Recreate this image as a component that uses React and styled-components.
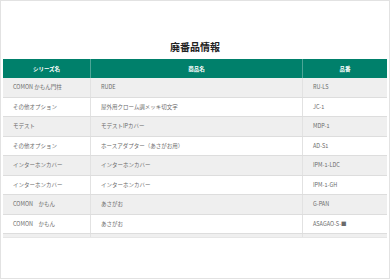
import React from "react"
import styled, { createGlobalStyle } from "styled-components"

const GlobalStyle = createGlobalStyle`
  html, body {
    margin: 0;
    padding: 0;
    background: #ffffff;
    font-family: "Noto Sans CJK JP", "Noto Sans", sans-serif;
  }
`

const rows = [
  ["COMON かもん門柱", "RUDE", "RU-LS"],
  ["その他オプション", "屋外用クローム調メッキ切文字", "JC-1"],
  ["モデスト", "モデストIPカバー", "MDP-1"],
  ["その他オプション", "ホースアダプター（あさがお用）", "AD-S1"],
  ["インターホンカバー", "インターホンカバー", "IPM-1-LDC"],
  ["インターホンカバー", "インターホンカバー", "IPM-1-GH"],
  ["COMON　かもん", "あさがお", "G-PAN"],
  ["COMON　かもん", "あさがお", "ASAGAO-S-■"],
  ["COMON　かもん", "あさがお", "ASAGAO-L"],
  ["モデスト", "モデストポスト", "MDP-2"],
  ["その他オプション", "表札", "NP-1"],
  ["インターホンカバー", "インターホンカバー", "IPM-2"],
  ["COMON かもん門柱", "RUDE", "RU-LL"],
  ["モデスト", "モデストIPカバー", "MDP-3"],
  ["その他オプション", "ホースアダプター", "AD-S2"],
  ["インターホンカバー", "インターホンカバー", "IPM-3"],
  ["COMON　かもん", "あさがお", "G-PAN2"],
  ["モデスト", "モデストポスト", "MDP-4"],
  ["その他オプション", "表札", "NP-2"],
  ["インターホンカバー", "インターホンカバー", "IPM-4"],
]

const App = () => (
  <>
    <GlobalStyle />
    <Frame>
      <Title>廃番品情報</Title>
      <Table>
        <HeadRow>
          <HeadCell>シリーズ名</HeadCell>
          <HeadCell>商品名</HeadCell>
          <HeadCell last>品番</HeadCell>
        </HeadRow>
        <Body>
          {rows.map((r, i) => (
            <Row key={i}>
              <Cell>{r[0]}</Cell>
              <Cell>{r[1]}</Cell>
              <Cell last>{r[2]}</Cell>
            </Row>
          ))}
        </Body>
      </Table>
    </Frame>
  </>
)

const Frame = styled.div`
  box-sizing: border-box;
  width: 390px;
  height: 279px;
  border: 1px solid #e2e2e2;
  padding: 0 2px;
`

const Title = styled.h1`
  margin: 0;
  padding-top: 38px;
  height: 20px;
  text-align: center;
  font-size: 10px;
  line-height: 16px;
  font-weight: 700;
  color: #222222;
`

const Table = styled.div`
  width: 384px;
`

const HeadRow = styled.div`
  display: grid;
  grid-template-columns: 88px 212px 1fr;
  height: 19px;
  background: #00806b;
`

const HeadCell = styled.div`
  display: flex;
  align-items: center;
  justify-content: center;
  color: #ffffff;
  font-size: 5.5px;
  font-weight: 700;
  border-right: ${p => (p.last ? "none" : "1px solid #4da597")};
`

const Body = styled.div`
  height: 159px;
  overflow-y: scroll;
  border-bottom: 1px solid #e6e6e6;
  &::-webkit-scrollbar {
    width: 5px;
  }
  &::-webkit-scrollbar-track {
    background: #f4f4f4;
  }
  &::-webkit-scrollbar-thumb {
    background: #c2c2c2;
  }
`

const Row = styled.div`
  display: grid;
  grid-template-columns: 88px 212px 1fr;
  height: 19.5px;
  box-sizing: border-box;
  border-bottom: 1px solid #dddddd;
  background: #ffffff;
  &:nth-child(odd) {
    background: #efefef;
  }
`

const Cell = styled.div`
  display: flex;
  align-items: center;
  padding-left: 10px;
  font-size: 5.5px;
  font-weight: 400;
  color: #6a6a6a;
  white-space: nowrap;
  border-right: ${p => (p.last ? "none" : "1px solid #e2e2e2")};
`

export default App
